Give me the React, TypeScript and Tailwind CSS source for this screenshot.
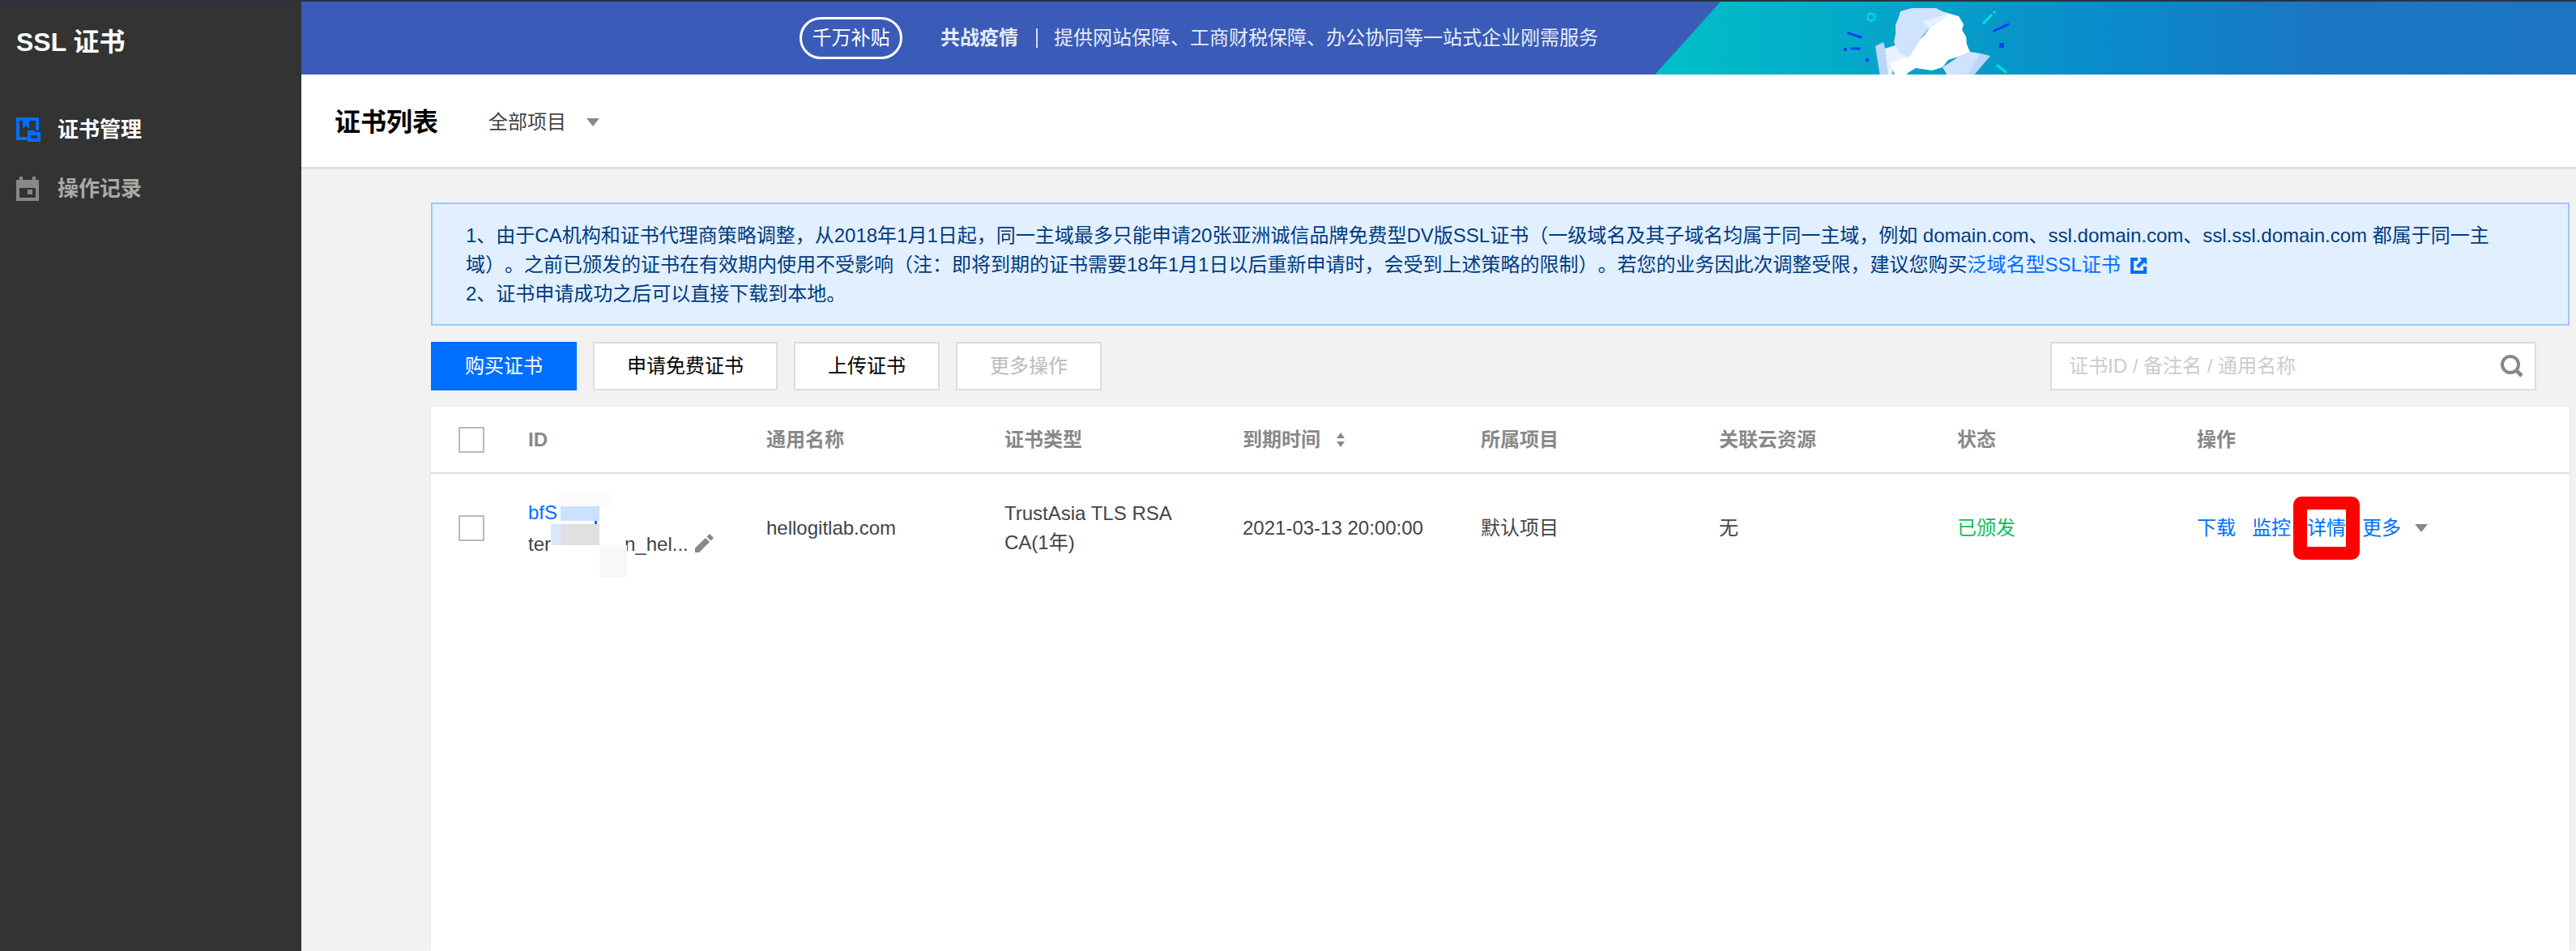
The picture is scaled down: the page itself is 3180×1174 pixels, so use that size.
const columns = ["通用名称", "证书类型", "到期时间", "所属项目", "关联云资源", "状态"];

function CertIcon() {
  return (
    <svg width="30" height="30" viewBox="0 0 30 30" className="shrink-0">
      <path fill="#006eff" d="M0 0h28v16h-4V4h-8v10l-4-4-4 4V4H4v20h10v4H0z" />
      <path fill="#006eff" fillRule="evenodd" d="M14 16h8l1 2h7v12H14zm4 6v4h8v-4z" />
    </svg>
  );
}

function RecordIcon() {
  return (
    <svg width="30" height="30" viewBox="0 0 30 30" className="shrink-0">
      <path fill="#888" fillRule="evenodd" d="M4 0h4v4h12V0h4v4h4v26H0V4h4zM4 14v12h20V14z" />
      <rect x="14" y="16" width="6" height="6" fill="#888" />
    </svg>
  );
}

function Triangle() {
  return (
    <svg width="16" height="10" viewBox="0 0 16 10" className="shrink-0">
      <path fill="#888" d="M0 0h16L8 10z" />
    </svg>
  );
}

function ExternalIcon() {
  return (
    <svg width="20" height="20" viewBox="0 0 20 20" className="ml-3 inline-block align-[-3px]">
      <path fill="#006eff" d="M0 0h9v4H4v12h12v-5h4v9H0z" />
      <path fill="#006eff" d="M11 0h9v9l-3-3-7 7-3-3 7-7z" />
    </svg>
  );
}

function SearchIcon() {
  return (
    <svg width="28" height="28" viewBox="0 0 28 28" className="shrink-0">
      <circle cx="12" cy="12" r="10" fill="none" stroke="#888" strokeWidth="4" />
      <path d="M19 19l7 7" stroke="#888" strokeWidth="5" />
    </svg>
  );
}

function PencilIcon() {
  return (
    <svg width="24" height="24" viewBox="0 0 24 24" className="shrink-0">
      <path fill="#888" d="M1 17.500 14 5l5 5L6 23H1z" />
      <path fill="#888" d="M15.500 3.500 19 0l5 5-3.500 3.500z" />
    </svg>
  );
}

// 横幅右侧的渐变和握手插画
function BannerArt() {
  return (
    <svg
      className="absolute right-0 top-0 h-[90px] w-[1137px]"
      viewBox="0 0 1137 90"
      preserveAspectRatio="none"
    >
      <defs>
        <linearGradient id="bannerFill" x1="0" x2="1" y1="0" y2="0">
          <stop offset="0" stopColor="#00c0c8" />
          <stop offset="0.5" stopColor="#0a8acb" />
          <stop offset="0.72" stopColor="#1a76c4" />
          <stop offset="1" stopColor="#1b75c3" />
        </linearGradient>
      </defs>
      <path fill="url(#bannerFill)" d="M81 0H1137V90H0z" />
      <g transform="translate(197 -2)">
        <path fill="#b9d5f8" d="M75 57l10-5 13 43H81z" />
        <path fill="#b9d5f8" d="M205 66l12 3-22 26h-13z" />
        <path fill="#e6f2ff" d="M87 60l18-6 10 16-15 10-7 15h-2z" />
        <path fill="#cfe3ff" d="M158 83l20-13 14-6 13 2-15 24-10 5h-15z" />
        <path fill="#ffffff" d="M150 12l28 8 6 10-2 7 5 8 1 10 4 9-14 6-13 4-7 9-13 4-20-3-10 6-3 5h-12l-7-17 22-8 12-18 8-8 8-11-10-9z" />
        <path fill="#cfe3ff" d="M106 14l14-4h30l15 8-25 18-8 10-7 12-8 12-12-4-7-14 2-10v-12l3-6z" />
        <path fill="#e6f2ff" d="M133 24l8 10 24-16-3-1-25 9z" />
      </g>
      <g transform="translate(197 -2)" strokeLinecap="square">
        <circle cx="70" cy="21" r="4.500" fill="none" stroke="#00e6d8" strokeWidth="2" />
        <path stroke="#0a44f0" strokeWidth="3" d="M42 41l15 5M46 60h9" />
        <path stroke="#0a44f0" strokeWidth="4" d="M38 61h0M65 74h0" />
        <path stroke="#00e6d8" strokeWidth="3" d="M209 28l9-9M222 15h0M226 81l10 8" />
        <path stroke="#0a44f0" strokeWidth="3" d="M222 38l17-8" />
        <path stroke="#0a44f0" strokeWidth="6" d="M231 56h0" />
      </g>
    </svg>
  );
}

export default function App() {
  return (
    <div className="flex h-screen min-w-[3180px] flex-col overflow-hidden bg-[#f2f2f2] text-[24px] [text-spacing-trim:space-all] [font-family:'Liberation_Sans','Noto_Sans_CJK_SC',sans-serif]">
      <div className="h-[2px] bg-[#2a3140]" />
      <div className="flex min-h-0 flex-1">
        <aside className="w-[372px] shrink-0 bg-[#333333] pl-5">
          <div className="flex h-[104px] items-center pb-[4px] text-[32px] font-bold text-white">SSL 证书</div>
          <nav className="flex flex-col gap-[43px] pt-[39px]">
            <div className="flex items-center gap-[21px] text-[26px] font-bold leading-[29px] text-white">
              <CertIcon />
              证书管理
            </div>
            <div className="flex items-center gap-[21px] text-[26px] font-bold leading-[29px] text-[#aaaaaa]">
              <RecordIcon />
              操作记录
            </div>
          </nav>
        </aside>

        <main className="flex min-w-0 flex-1 flex-col">
          <div className="relative flex h-[90px] shrink-0 items-center bg-[#3a5bb8] pl-[615px] text-[#e6ebf7]">
            <BannerArt />
            <span className="flex h-[52px] w-[127px] items-center justify-center rounded-[26px] border-[3px] border-white text-white">
              千万补贴
            </span>
            <span className="ml-[47px] font-bold">共战疫情</span>
            <span className="ml-[22px] h-[24px] w-[2px] bg-[#d5ddf2]" />
            <span className="ml-[20px]">提供网站保障、工商财税保障、办公协同等一站式企业刚需服务</span>
          </div>

          <header className="flex h-[117px] shrink-0 items-center border-b-[3px] border-[#dddddd] bg-white pl-[41px] pt-[4px]">
            <h1 className="w-[190px] text-[32px] font-bold text-black">证书列表</h1>
            <span className="text-[#444444]">全部项目</span>
            <span className="ml-[25px]">
              <Triangle />
            </span>
          </header>

          <div className="flex min-h-0 flex-1 flex-col pl-[160px] pr-[8px] pt-[41px]">
            <div className="h-[152px] shrink-0 border-2 border-[#99c7ff] bg-[#e2efff] px-[41px] py-[21px] leading-[36px] text-[#003b80]">
              <p className="whitespace-nowrap">
                1、由于CA机构和证书代理商策略调整，从2018年1月1日起，同一主域最多只能申请20张亚洲诚信品牌免费型DV版SSL证书（一级域名及其子域名均属于同一主域，例如 domain.com、ssl.domain.com、ssl.ssl.domain.com 都属于同一主
              </p>
              <p className="whitespace-nowrap">
                域）。之前已颁发的证书在有效期内使用不受影响（注：即将到期的证书需要18年1月1日以后重新申请时，会受到上述策略的限制）。若您的业务因此次调整受限，建议您购买
                <a className="text-[#006eff]">泛域名型SSL证书</a>
                <ExternalIcon />
              </p>
              <p className="whitespace-nowrap">2、证书申请成功之后可以直接下载到本地。</p>
            </div>

            <div className="mt-[20px] flex h-[60px] shrink-0 gap-[20px] pr-[41px]">
              <button className="w-[180px] bg-[#006eff] text-white">购买证书</button>
              <button className="w-[228px] border-2 border-[#dddddd] bg-white text-black">申请免费证书</button>
              <button className="w-[180px] border-2 border-[#dddddd] bg-white text-black">上传证书</button>
              <button className="w-[180px] border-2 border-[#dddddd] bg-white text-[#bbbbbb]">更多操作</button>
              <div className="ml-auto flex w-[600px] items-center border-2 border-[#dddddd] bg-white pl-[21px] pr-[14px]">
                <input
                  className="min-w-0 flex-1 bg-transparent outline-none placeholder:text-[#cccccc]"
                  placeholder="证书ID / 备注名 / 通用名称"
                />
                <SearchIcon />
              </div>
            </div>

            <div className="mt-[20px] min-h-0 flex-1 bg-white shadow-[0_0_3px_rgba(0,0,0,0.08)]">
              <div className="grid h-[83px] grid-cols-[120px_repeat(7,294px)_1fr] items-center border-b-2 border-[#dddddd] font-bold text-[#888888]">
                <span className="ml-[34px] h-[32px] w-[32px] border-2 border-[#bbbbbb]" />
                <span>ID</span>
                {columns.map((name) => (
                  <span key={name} className="flex items-center gap-[18px]">
                    {name}
                    {name === "到期时间" && (
                      <svg width="14" height="18" viewBox="0 0 14 18">
                        <path fill="#888" d="M7 0l5 7H2zM7 18l-5-7h10z" />
                      </svg>
                    )}
                  </span>
                ))}
                <span className="ml-[2px]">操作</span>
              </div>

              <div className="grid h-[133px] grid-cols-[120px_repeat(7,294px)_1fr] items-center leading-[36px] text-[#444444]">
                <span className="ml-[34px] h-[32px] w-[32px] border-2 border-[#bbbbbb]" />
                <div className="relative">
                  <a className="block leading-[39px] text-[#006eff]">bfS</a>
                  <div className="flex items-center leading-[39px]">
                    <span className="w-[119px]">ter</span>
                    <span>n_hel...</span>
                    <span className="ml-[7px]">
                      <PencilIcon />
                    </span>
                  </div>
                  {/* 打码色块 */}
                  <span className="absolute left-[36px] top-[-4px] h-[16px] w-[68px] bg-[#fbfbfb]" />
                  <span className="absolute left-[40px] top-[12px] h-[18px] w-[48px] bg-[#cce0ff]" />
                  <span className="absolute left-[82px] top-[30px] h-[4px] w-[3px] bg-[#006eff]" />
                  <span className="absolute left-[28px] top-[34px] h-[26px] w-[12px] bg-[#dbe9ff]" />
                  <span className="absolute left-[40px] top-[34px] h-[26px] w-[48px] bg-[#e0e0e0]" />
                  <span className="absolute left-[88px] top-[60px] h-[40px] w-[34px] bg-[#f8f8f8]" />
                </div>
                <span>hellogitlab.com</span>
                <span className="w-[230px]">TrustAsia TLS RSA CA(1年)</span>
                <span>2021-03-13 20:00:00</span>
                <span>默认项目</span>
                <span>无</span>
                <span className="text-[#0abf5b]">已颁发</span>
                <div className="ml-[2px] flex items-center gap-[20px] whitespace-nowrap text-[#006eff]">
                  <a>下载</a>
                  <a>监控</a>
                  <a className="relative">
                    详情
                    <span className="absolute -inset-x-[17px] -inset-y-[21px] rounded-[10px] border-x-[17px] border-y-[16px] border-[#ff0000]" />
                  </a>
                  <span className="flex items-center gap-[17px]">
                    <a>更多</a>
                    <Triangle />
                  </span>
                </div>
              </div>
            </div>
          </div>
        </main>
      </div>
    </div>
  );
}
